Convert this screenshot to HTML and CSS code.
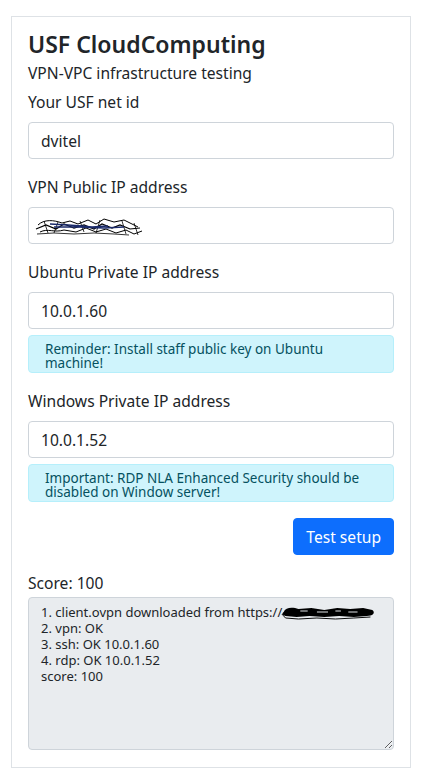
FILE: index.html
```html
<!DOCTYPE html>
<html lang="en">
<head>
<meta charset="utf-8">
<title>USF CloudComputing</title>
<link rel="stylesheet" href="styles.css">
</head>
<body>
<div class="page">
  <div class="card">
    <h1 class="title">USF CloudComputing</h1>
    <p class="subtitle">VPN-VPC infrastructure testing</p>

    <div class="group">
      <label class="label">Your USF net id</label>
      <input class="control" type="text" value="dvitel">
    </div>

    <div class="group">
      <label class="label">VPN Public IP address</label>
      <div class="masked">
        <input class="control" type="text" value="">
        <svg class="scribble scribble-ip" width="110" height="22" viewBox="0 0 110 22">
          <path d="M4 10 C10 4 20 5 28 8 L36 6 L44 9 L54 5 L62 9 L70 4 L80 7 L90 5 L98 9 L104 12" fill="none" stroke="#000" stroke-width="1"/>
          <path d="M2 14 L12 10 L22 14 L30 9 L40 13 L50 10 L60 14 L68 9 L78 13 L86 10 L96 14 L106 13" fill="none" stroke="#000" stroke-width="1.2"/>
          <path d="M6 17 C14 13 20 18 30 15 L42 17 L52 13 L62 17 L72 14 L82 18 L92 15 L100 19 L108 16" fill="none" stroke="#000" stroke-width="1"/>
          <path d="M3 19 L20 18 L40 19 L60 18 L80 19 L95 20" fill="none" stroke="#000" stroke-width="0.8"/>
          <path d="M10 6 L14 18 M24 7 L20 18 M46 6 L50 17 M66 5 L62 18 M88 6 L92 19 M100 8 L104 20" fill="none" stroke="#000" stroke-width="0.8"/>
          <path d="M16 9 L34 10 L48 11 L58 12 L74 11 M20 12 L44 12 L70 13 L90 12" fill="none" stroke="#1a2a6a" stroke-width="1.4"/>
        </svg>
      </div>
    </div>

    <div class="group">
      <label class="label">Ubuntu Private IP address</label>
      <input class="control" type="text" value="10.0.1.60">
      <div class="alert">Reminder: Install staff public key on Ubuntu machine!</div>
    </div>

    <div class="group">
      <label class="label">Windows Private IP address</label>
      <input class="control" type="text" value="10.0.1.52">
      <div class="alert">Important: RDP NLA Enhanced Security should be disabled on Window server!</div>
    </div>

    <div class="actions">
      <button class="btn" type="button">Test setup</button>
    </div>

    <div class="score">Score: 100</div>
    <div class="result-wrap">
      <textarea class="result" readonly>1. client.ovpn downloaded from https://
2. vpn: OK
3. ssh: OK 10.0.1.60
4. rdp: OK 10.0.1.52
score: 100</textarea>
      <svg class="scribble scribble-url" width="96" height="16" viewBox="0 0 104 16" preserveAspectRatio="none">
        <path d="M4 8 C6 3 14 3 20 5 L34 4 L48 6 L62 4 L76 5 L90 4 L100 6 C104 9 100 12 94 12 L80 13 L64 12 L48 13 L32 12 L18 13 L6 12 C2 11 2 9 4 8 Z" fill="#000"/>
        <path d="M22 7 L30 7 M40 8 L52 8 M60 7 L66 7 M74 8 L84 8" stroke="#e9ecef" stroke-width="1"/>
        <path d="M2 10 L6 14 L20 15 L40 14 L60 15 L80 14 L98 13" fill="none" stroke="#000" stroke-width="1"/>
      </svg>
    </div>
  </div>
</div>
</body>
</html>
```
FILE: styles.css
```css
* { box-sizing: border-box; }
body {
  margin: 0;
  background: #fff;
  font-family: "Noto Sans", "Open Sans", sans-serif;
  color: #212529;
}
.page {
  padding: 16px 14px 0 11px;
}
.card {
  border: 1px solid #dee2e6;
  padding: 13px 16px 17px 16px;
}
.title {
  margin: 0;
  font-size: 23px;
  font-weight: 600;
  line-height: 29px;
}
.subtitle {
  margin: 2px 0 5px 0;
  font-size: 15.6px;
  line-height: 24px;
}
.group {
  margin-bottom: 16px;
}
.label {
  display: block;
  font-size: 15.6px;
  line-height: 24px;
  margin-bottom: 8px;
}
.control {
  display: block;
  width: 100%;
  height: 37px;
  padding: 0 12px;
  font-family: inherit;
  font-size: 15.6px;
  color: #212529;
  background: #fff;
  border: 1px solid #ced4da;
  border-radius: 4px;
  outline: none;
}
.masked { position: relative; }
.scribble { position: absolute; display: block; }
.scribble-ip { left: 6px; top: 8px; }
.alert {
  margin-top: 6px;
  padding: 6px 16px 3px 16px;
  background: #cff4fc;
  border: 1px solid #b6effb;
  border-radius: 4px;
  color: #055160;
  font-size: 13.5px;
  line-height: 14px;
  height: 38px;
}
.actions {
  display: flex;
  justify-content: flex-end;
  margin-bottom: 16px;
}
.btn {
  height: 37px;
  padding: 0 12px;
  font-family: inherit;
  font-size: 15.6px;
  color: #fff;
  background: #0d6efd;
  border: 1px solid #0d6efd;
  border-radius: 4px;
}
.score {
  font-size: 15.6px;
  line-height: 24px;
  margin-bottom: 2px;
}
.result-wrap { position: relative; }
.result {
  display: block;
  width: 100%;
  height: 153px;
  padding: 6px 12px;
  font-family: inherit;
  font-size: 13px;
  line-height: 16px;
  color: #212529;
  background: #e9ecef;
  border: 1px solid #ced4da;
  border-radius: 4px;
  outline: none;
  resize: vertical;
}
.scribble-url { left: 252px; top: 7px; }
```
